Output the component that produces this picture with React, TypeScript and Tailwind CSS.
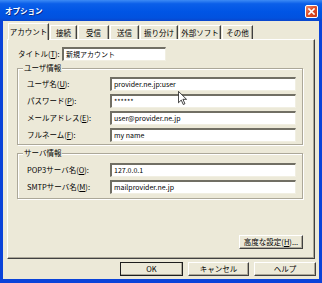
import React from "react";

const font = { fontFamily: '"Noto Sans CJK JP", "Noto Sans", sans-serif' };

function Mn({ c }: { c: string }) {
  return <span className="underline underline-offset-1">{c}</span>;
}

function Field({ value, w }: { value: string; w: string }) {
  return (
    <div
      className={`${w} h-[14px] bg-white border-t-2 border-l-2 border-t-[#716F64] border-l-[#716F64] border-b border-r border-b-[#F1EFE2] border-r-[#F1EFE2] flex items-center pl-[2px] text-[7px] leading-none text-black whitespace-nowrap overflow-hidden`}
    >
      {value}
    </div>
  );
}

function Row({ label, value }: { label: React.ReactNode; value: string }) {
  return (
    <div className="flex items-center h-[14px]">
      <div className="w-[83px] text-[7.5px] leading-none text-black whitespace-nowrap">{label}</div>
      <Field value={value} w="w-[186px]" />
    </div>
  );
}

function Btn({ children, w, def }: { children: React.ReactNode; w: string; def?: boolean }) {
  return (
    <div
      className={`${w} h-[14px] flex items-center justify-center text-[7.5px] leading-none text-black bg-[#ECE9D8] border whitespace-nowrap ${
        def ? "border-[#1E1E1E]" : "border-t-white border-l-white border-b-[#404040] border-r-[#404040]"
      } shadow-[inset_-1px_-1px_0_#ACA899]`}
    >
      {children}
    </div>
  );
}

function Group({ title, h, children }: { title: string; h: string; children: React.ReactNode }) {
  return (
    <div className={`relative w-[286px] ${h} border border-[#ACA899] shadow-[inset_1px_1px_0_#FFFFFF,1px_1px_0_#FFFFFF]`}>
      <span className="absolute left-[5px] top-[-6px] bg-[#ECE9D8] px-[1px] text-[7.5px] leading-[10px] text-black whitespace-nowrap">
        {title}
      </span>
      {children}
    </div>
  );
}

const tabs = ["接続", "受信", "送信", "振り分け", "外部ソフト", "その他"];
const tabW = ["w-[27px]", "w-[31px]", "w-[29px]", "w-[38px]", "w-[42px]", "w-[31px]"];

export default function App() {
  return (
    <div className="relative w-[322px] h-[283px] flex flex-col bg-[#0A43D9] overflow-hidden" style={font}>
      {/* title bar */}
      <div className="h-[21px] flex items-center justify-between pl-[5px] pr-[4px] bg-[linear-gradient(to_bottom,#3D8BF5_0%,#0B5FE9_18%,#0055E5_55%,#0152DF_85%,#0A45CC_100%)]">
        <span className="text-white font-bold text-[7.5px] leading-none [text-shadow:1px_1px_0_#0A2A8A]">
          オプション
        </span>
        <div className="w-[13px] h-[13px] mt-[2px] rounded-[2px] border border-white bg-[linear-gradient(135deg,#F08A6A_0%,#E0502A_45%,#C8391A_100%)] flex items-center justify-center">
          <svg width="7" height="7" viewBox="0 0 7 7">
            <path d="M1 1 L6 6 M6 1 L1 6" stroke="white" strokeWidth="1.6" strokeLinecap="square" />
          </svg>
        </div>
      </div>

      {/* body */}
      <div className="flex-1 mx-[3px] mb-[4px] bg-[#ECE9D8] flex flex-col">
        {/* tabs */}
        <div className="flex items-end pt-[2px] pl-[5px] h-[18px]">
          <div className="relative z-10 w-[41px] h-[17px] -mb-px bg-[#ECE9D8] border-t border-l border-white border-r border-r-[#404040] shadow-[inset_-1px_0_0_#ACA899] flex items-center justify-center text-[7.5px] leading-none text-black whitespace-nowrap">
            アカウント
          </div>
          {tabs.map((t, i) => (
            <div
              key={t}
              className={`${tabW[i]} h-[14px] ml-px border-t border-l border-white border-r border-r-[#404040] shadow-[inset_-1px_0_0_#ACA899] flex items-center justify-center text-[7.5px] leading-none text-black whitespace-nowrap`}
            >
              {t}
            </div>
          ))}
        </div>

        {/* panel */}
        <div className="ml-[4px] w-[308px] h-[220px] border-t border-l border-white border-b border-r border-b-[#404040] border-r-[#404040] shadow-[inset_-1px_-1px_0_#ACA899] flex flex-col pl-[9px] pt-[7px]">
          <div className="flex items-center h-[14px] ml-px">
            <div className="w-[44px] text-[7.5px] leading-none text-black whitespace-nowrap">
              タイトル(<Mn c="T" />):
            </div>
            <Field value="新規アカウント" w="w-[104px]" />
          </div>

          <div className="mt-[7px]">
            <Group title="ユーザ情報" h="h-[77px]">
              <div className="flex flex-col gap-[3px] pt-[8px] pl-[9px]">
                <Row label={<>ユーザ名(<Mn c="U" />):</>} value="provider.ne.jp:user" />
                <Row label={<>パスワード(<Mn c="P" />):</>} value="******" />
                <Row label={<>メールアドレス(<Mn c="E" />):</>} value="user@provider.ne.jp" />
                <Row label={<>フルネーム(<Mn c="F" />):</>} value="my name" />
              </div>
            </Group>
          </div>

          <div className="mt-[8px]">
            <Group title="サーバ情報" h="h-[46px]">
              <div className="flex flex-col gap-[3px] pt-[9px] pl-[9px]">
                <Row label={<>POP3サーバ名(<Mn c="O" />):</>} value="127.0.0.1" />
                <Row label={<>SMTPサーバ名(<Mn c="M" />):</>} value="mailprovider.ne.jp" />
              </div>
            </Group>
          </div>

          <div className="w-[286px] flex justify-end mt-[36px]">
            <Btn w="w-[64px]">
              高度な設定(<Mn c="H" />)...
            </Btn>
          </div>
        </div>

        {/* bottom buttons */}
        <div className="flex justify-end gap-[5px] pr-[3px] mt-[3px]">
          <Btn w="w-[63px]" def>
            OK
          </Btn>
          <Btn w="w-[61px]">キャンセル</Btn>
          <Btn w="w-[62px]">ヘルプ</Btn>
        </div>
      </div>

      {/* mouse cursor */}
      <svg className="absolute left-[178px] top-[91px]" width="9" height="14" viewBox="0 0 12 19">
        <path d="M0.5 0.5 L0.5 16 L4.3 12.3 L7 18.3 L9.3 17.3 L6.6 11.3 L11.5 11.3 Z" fill="white" stroke="black" strokeWidth="1" strokeLinejoin="miter" />
      </svg>
    </div>
  );
}
